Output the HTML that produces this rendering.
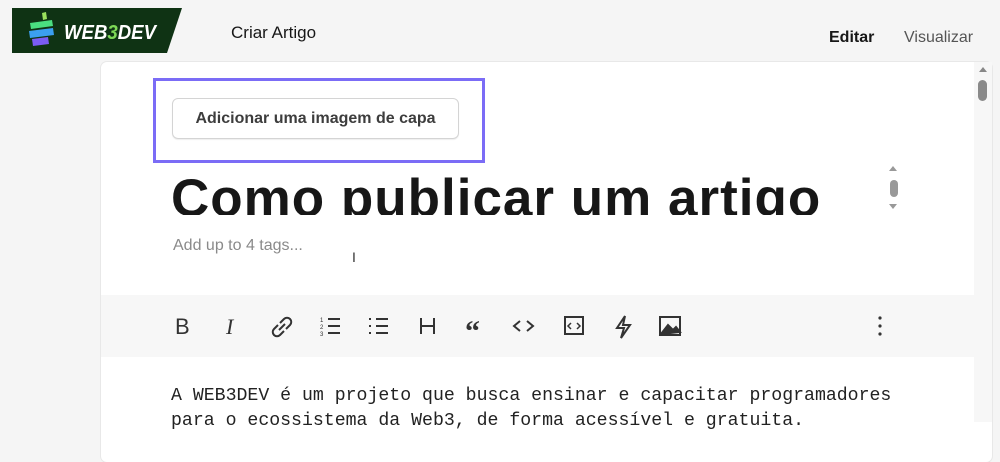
<!DOCTYPE html>
<html><head><meta charset="utf-8"><style>
*{margin:0;padding:0;box-sizing:border-box}
body{width:1000px;height:420px;overflow:hidden;background:#f5f5f5;font-family:"Liberation Sans",sans-serif;position:relative;color:#171717}
.abs{position:absolute}
.card{left:101px;top:62px;width:891px;height:400px;background:#fff;border-radius:6px;box-shadow:0 0 0 1px #e8e8e8}
.track{left:974px;top:62px;width:18px;height:360px;background:#f7f7f7}
.btn{left:172px;top:98px;width:287px;height:41px;border:1.5px solid #d4d4d4;border-radius:6px;font-size:16px;font-weight:bold;color:#3d3d3d;display:flex;align-items:center;justify-content:center;box-shadow:0 1px 1px #eee}
.hl{left:153px;top:78px;width:332px;height:85px;border:3px solid #7b6cf6}
.title{left:171px;top:164px;width:700px;height:51px;overflow:hidden;font-size:53px;font-weight:bold;line-height:70px;letter-spacing:1px;color:#171717;white-space:nowrap}
.tb{left:101px;top:295px;width:873px;height:62px;background:#f7f7f7}
.mono{font-family:'Liberation Mono',monospace;font-size:18.2px;color:#222;white-space:nowrap}
</style></head><body>
<svg class="abs" style="left:12px;top:8px" width="170" height="45" viewBox="0 0 170 45">
<polygon points="0,0 170,0 155,45 0,45" fill="#0f3314"/>
<polygon points="30,5 34,4 35,11 31,12" fill="#9be15d"/>
<polygon points="18,15 40,12 41,18 19,21" fill="#4ade80"/>
<polygon points="17,23 41,20 42,27 18,30" fill="#3b9ff0"/>
<polygon points="20,31 36,29 37,36 21,38" fill="#7b5cf5"/>
<text x="52" y="31" font-family="Liberation Sans" font-weight="bold" font-style="italic" font-size="20" fill="#fff" textLength="92" lengthAdjust="spacingAndGlyphs">WEB<tspan fill="#7ed957">3</tspan>DEV</text>
</svg>
<div class="abs" style="left:231px;top:23px;font-size:17px;color:#171717">Criar Artigo</div>
<div class="abs" style="left:829px;top:29px;font-size:16px;font-weight:bold">Editar</div>
<div class="abs" style="left:904px;top:29px;font-size:16px;color:#555">Visualizar</div>
<div class="abs card"></div>
<div class="abs track"></div>
<div class="abs" style="left:979px;top:67px;width:0;height:0;border-left:4px solid transparent;border-right:4px solid transparent;border-bottom:5px solid #888"></div>
<div class="abs" style="left:978px;top:80px;width:9px;height:21px;border-radius:5px;background:#8a8a8a"></div>
<div class="abs hl"></div>
<div class="abs btn">Adicionar uma imagem de capa</div>
<div class="abs title">Como publicar um artigo</div>
<div class="abs" style="left:889px;top:166px;width:0;height:0;border-left:4px solid transparent;border-right:4px solid transparent;border-bottom:5px solid #999"></div>
<div class="abs" style="left:890px;top:180px;width:8px;height:17px;border-radius:4px;background:#999"></div>
<div class="abs" style="left:889px;top:204px;width:0;height:0;border-left:4px solid transparent;border-right:4px solid transparent;border-top:5px solid #999"></div>
<div class="abs" style="left:173px;top:237px;font-size:16px;color:#8a8a8a">Add up to 4 tags...</div>
<div class="abs" style="left:352px;top:249px;font-size:14px;color:#333">I</div>
<div class="abs tb"></div>
<svg class="abs" style="left:170px;top:313px" width="720" height="28" fill="none" stroke="#333" stroke-width="2">
<text x="5" y="21" font-size="22" fill="#333" stroke="none" font-family="Liberation Sans">B</text>
<text x="56" y="21" font-size="22" fill="#333" stroke="none" font-family="Liberation Serif" font-style="italic">I</text>
<path d="M110 10 l4-4 a4 4 0 0 1 6 6 l-4 4 M114 18 l-4 4 a4 4 0 0 1-6-6 l4-4 M109 17 l6-6"/>
<path d="M158 6h12M158 13h12M158 20h12"/><text x="150" y="9" font-size="6" fill="#333" stroke="none">1</text><text x="150" y="16" font-size="6" fill="#333" stroke="none">2</text><text x="150" y="23" font-size="6" fill="#333" stroke="none">3</text>
<path d="M206 6h12M206 13h12M206 20h12M199 6h2M199 13h2M199 20h2"/>
<path d="M251 5v16M264 5v16M251 13h13"/>
<text x="295" y="28" font-size="30" font-weight="bold" fill="#333" stroke="none" font-family="Liberation Serif">“</text>
<path d="M350 8l-6 5 6 5M357 8l6 5-6 5"/>
<rect x="395" y="4" width="18" height="17"/><path d="M401 10l-3 3 3 3M407 10l3 3-3 3" stroke-width="1.5"/>
<path d="M455 3l-8 12h7l-3 10 9-13h-7z"/>
<rect x="490" y="4" width="20" height="18"/><path d="M491 21l7-9 5 5 3-3 4 5z" fill="#333"/>
<circle cx="710" cy="5" r="1.6" fill="#333" stroke="none"/><circle cx="710" cy="13" r="1.6" fill="#333" stroke="none"/><circle cx="710" cy="21" r="1.6" fill="#333" stroke="none"/>
</svg>
<div class="abs mono" style="left:171px;top:386px">A WEB3DEV é um projeto que busca ensinar e capacitar programadores</div>
<div class="abs mono" style="left:171px;top:411px">para o ecossistema da Web3, de forma acessível e gratuita.</div>
</body></html>
